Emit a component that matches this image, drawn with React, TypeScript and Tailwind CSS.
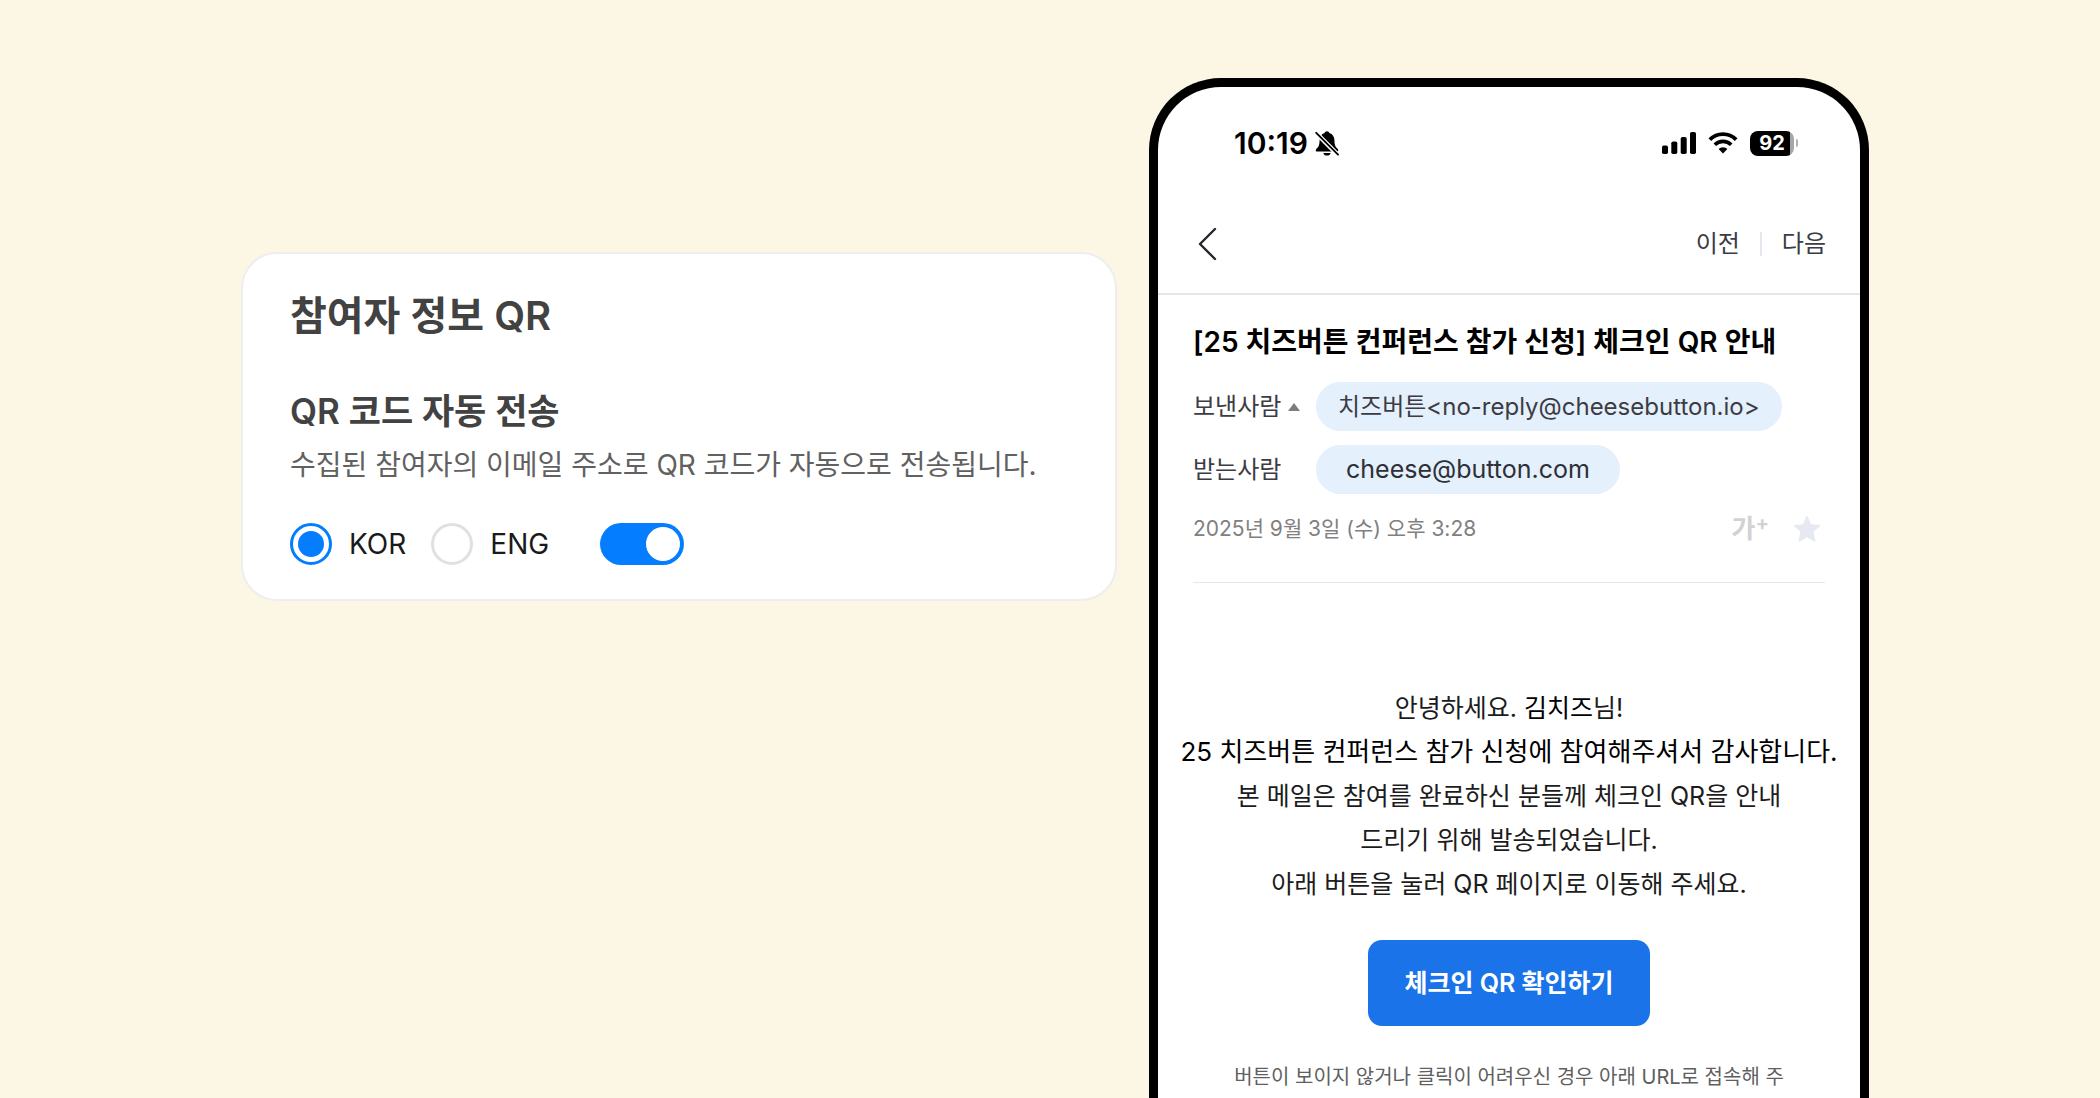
import { useState } from "react";

function MutedBellIcon() {
  return (
    <svg viewBox="0 0 24 26" className="h-[26px] w-6" aria-hidden="true">
      <path
        d="M12 1.2c1.2 0 2.1.7 2.4 1.8 3.3 1 4.9 3.8 5 7.200 0 4.300.9 6.300 2.600 8 .9.9 1.300 1.500 1.300 2.100 0 .8-.6 1.200-1.400 1.200H2.100c-.8 0-1.400-.4-1.400-1.200 0-.6.4-1.200 1.300-2.100 1.700-1.700 2.600-3.700 2.600-8 .1-3.400 1.700-6.200 5-7.200.3-1.100 1.200-1.800 2.400-1.800z"
        fill="black"
      />
      <path d="M8.300 22.900h7.400c-.3 1.600-1.800 2.700-3.700 2.700s-3.400-1.100-3.700-2.700z" fill="black" />
      <path d="M0 1.800 23 25" stroke="white" strokeWidth="4.600" />
      <path d="M1.200 2.800 23 24.600" stroke="black" strokeWidth="1.900" strokeLinecap="round" />
    </svg>
  );
}

function SignalIcon() {
  return (
    <svg viewBox="0 0 34 22" className="h-[22px] w-[34px]" aria-hidden="true">
      <rect x="0" y="13.500" width="6" height="8.500" rx="1.800" />
      <rect x="9.300" y="9.500" width="6" height="12.500" rx="1.800" />
      <rect x="18.700" y="5" width="6" height="17" rx="1.800" />
      <rect x="28" y="0" width="6" height="22" rx="1.800" />
    </svg>
  );
}

function WifiIcon() {
  return (
    <svg viewBox="0 0 30 22" className="h-[22px] w-[30px]" fill="none" stroke="black" aria-hidden="true">
      <path d="M1.800 7.600a18.600 18.600 0 0 1 26.400 0" strokeWidth="3.800" />
      <path d="M6.800 12.800a11.600 11.600 0 0 1 16.400 0" strokeWidth="3.600" />
      <path d="M15 21.500l-4.400-4.400a6.200 6.200 0 0 1 8.800 0z" fill="black" stroke="none" />
    </svg>
  );
}

function Battery({ level }: { level: number }) {
  return (
    <div className="flex items-center gap-0.5">
      <div className="flex h-[25px] w-11 items-center justify-center rounded-lg bg-linear-to-r from-black from-92% to-[#a6a6a6] to-92% text-[20px] leading-[25px] font-bold text-white">
        {level}
      </div>
      <span className="h-2 w-0.5 rounded-r-full bg-[#b0b0b0]" />
    </div>
  );
}

function StatusBar() {
  return (
    <div className="flex h-[108px] items-center justify-between pt-1 pr-[62px] pl-[76px]">
      <div className="flex items-center gap-[7px]">
        <span className="text-[30px] leading-10 font-semibold">10:19</span>
        <MutedBellIcon />
      </div>
      <div className="flex items-center gap-3">
        <SignalIcon />
        <WifiIcon />
        <Battery level={92} />
      </div>
    </div>
  );
}

function MailNav() {
  return (
    <nav className="flex h-[100px] items-center justify-between border-b-2 border-[#e6e6ea] pr-[34px] pl-[39px] text-[24px] leading-8 text-[#3c3c44]">
      <button type="button" aria-label="뒤로">
        <svg viewBox="0 0 20 34" className="h-[34px] w-5" fill="none" aria-hidden="true">
          <path d="M18 2 3 17l15 15" stroke="#25252d" strokeWidth="2.400" strokeLinecap="round" strokeLinejoin="round" />
        </svg>
      </button>
      <div className="flex items-center">
        <button type="button">이전</button>
        <span className="mx-5 h-6 w-0.5 bg-[#e6e6ee]" />
        <button type="button">다음</button>
      </div>
    </nav>
  );
}

function MailHeader() {
  return (
    <header className="mx-[35px] border-b border-[#e6e6ee] pt-[27px] pb-[33px] text-[#3c3c44]">
      <h2 className="text-[28px] leading-10 font-semibold whitespace-nowrap text-black">
        [25 치즈버튼 컨퍼런스 참가 신청] 체크인 QR 안내
      </h2>
      <dl className="mt-5 grid grid-cols-[123px_1fr] items-center gap-y-3.5 text-[24px] leading-[49px]">
        <dt className="flex items-center gap-[7px]">
          보낸사람
          <svg viewBox="0 0 12 8" className="h-2 w-3" aria-hidden="true">
            <path d="M6 0l6 8H0z" fill="#7d7d7d" />
          </svg>
        </dt>
        <dd className="justify-self-start rounded-full bg-[#e4f0fc] px-[22px] whitespace-nowrap">
          치즈버튼&lt;no-reply@cheesebutton.io&gt;
        </dd>
        <dt>받는사람</dt>
        <dd className="justify-self-start rounded-full bg-[#e4f0fc] px-[30px] text-[25px] text-[#2f2f38]">
          cheese@button.com
        </dd>
      </dl>
      <div className="mt-[15px] flex h-10 items-center justify-between">
        <time className="text-[21px] leading-8 text-[#808080]">2025년 9월 3일 (수) 오후 3:28</time>
        <div className="flex items-center gap-6 pr-1">
          <button type="button" aria-label="글자 크게" className="flex text-[26px] leading-8 font-bold text-[#d2d2d2]">
            가<sup className="top-0 text-[20px] leading-5">+</sup>
          </button>
          <button type="button" aria-label="중요 표시">
            <svg viewBox="0 0 28 28" className="size-7" aria-hidden="true">
              <path
                d="M14 1.200l3.700 8.500 9.300.9-7 6.200 2 9.700-8-4.900-8 4.900 2-9.700-7-6.200 9.300-.9z"
                fill="#e6e8f2"
                stroke="#e6e8f2"
                strokeLinejoin="round"
              />
            </svg>
          </button>
        </div>
      </div>
    </header>
  );
}

function MailBody() {
  return (
    <article className="flex flex-col items-center pt-[103px] text-center whitespace-nowrap">
      <div className="text-[25px] leading-[44px] text-[#1c1c1c]">
        <p>
          안녕하세요. <span className="text-black">김치즈</span>님!
        </p>
        <p className="text-[26px] text-black">25 치즈버튼 컨퍼런스 참가 신청에 참여해주셔서 감사합니다.</p>
        <p>본 메일은 참여를 완료하신 분들께 체크인 QR을 안내</p>
        <p>드리기 위해 발송되었습니다.</p>
        <p>아래 버튼을 눌러 QR 페이지로 이동해 주세요.</p>
      </div>
      <a
        href="#check-in"
        className="mt-[34px] rounded-[14px] bg-[#1a73e8] px-9 py-[25px] text-[25px] leading-9 font-semibold text-white"
      >
        체크인 QR 확인하기
      </a>
      <p className="mt-9 text-[20px] leading-[30px] text-[#5f5f5f]">
        버튼이 보이지 않거나 클릭이 어려우신 경우 아래 URL로 접속해 주
      </p>
    </article>
  );
}

function LanguageRadio({
  label,
  checked,
  onChange,
}: {
  label: string;
  checked: boolean;
  onChange: () => void;
}) {
  return (
    <label className="flex items-center gap-[17px] text-[28px] leading-10 text-[#1a1a1a]">
      <input
        type="radio"
        name="language"
        checked={checked}
        onChange={onChange}
        className="size-[42px] appearance-none rounded-full border-3 border-[#e0e0e0] bg-clip-content p-[5px] checked:border-[#057dff] checked:bg-[#057dff]"
      />
      {label}
    </label>
  );
}

function QrSettingsCard() {
  const [language, setLanguage] = useState("KOR");
  const [enabled, setEnabled] = useState(true);
  return (
    <section className="mt-[252px] min-w-0 flex-1 self-start rounded-[36px] border-2 border-[#eeeeee] bg-white px-[47px] pt-[38px] pb-[34px] text-[#424242]">
      <h1 className="text-[40px] leading-[48px] font-semibold">참여자 정보 QR</h1>
      <h2 className="mt-[50px] text-[35px] leading-[42px] font-semibold">QR 코드 자동 전송</h2>
      <p className="mt-4 text-[28px] leading-[34px] text-[#616161]">
        수집된 참여자의 이메일 주소로 QR 코드가 자동으로 전송됩니다.
      </p>
      <div className="mt-[41px] flex items-center">
        <div className="flex gap-[25px]">
          {["KOR", "ENG"].map((item) => (
            <LanguageRadio
              key={item}
              label={item}
              checked={language === item}
              onChange={() => setLanguage(item)}
            />
          ))}
        </div>
        <button
          type="button"
          role="switch"
          aria-checked={enabled}
          aria-label="QR 코드 자동 전송"
          onClick={() => setEnabled(!enabled)}
          className="ml-[51px] flex h-[42px] w-[84px] items-center rounded-full bg-[#c4c4c4] p-1 aria-checked:justify-end aria-checked:bg-[#057dff]"
        >
          <span className="size-[34px] rounded-full bg-white" />
        </button>
      </div>
    </section>
  );
}

export default function App() {
  return (
    <main className="h-screen overflow-hidden bg-[#fcf6e4] pl-2.5 font-['Inter','Noto_Sans_CJK_KR',sans-serif]" lang="ko">
      <div className="mx-auto flex h-full max-w-[1628px] gap-8">
        <QrSettingsCard />
        <section className="mt-[78px] w-[720px] shrink-0 overflow-hidden rounded-t-[72px] border-9 border-b-0 border-black bg-white text-black">
          <StatusBar />
          <MailNav />
          <MailHeader />
          <MailBody />
        </section>
      </div>
    </main>
  );
}
